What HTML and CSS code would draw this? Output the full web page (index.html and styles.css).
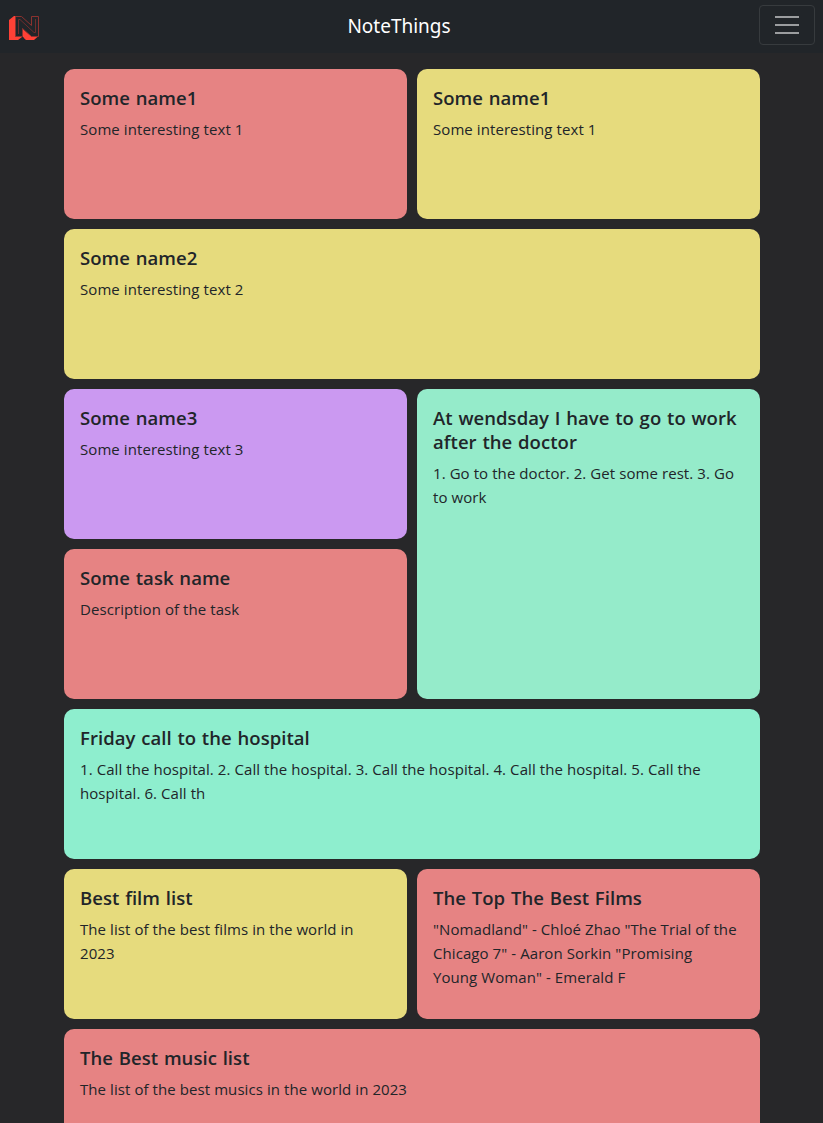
FILE: index.html
```html
<!DOCTYPE html>
<html lang="en">
<head>
<meta charset="utf-8">
<title>NoteThings</title>
<link rel="stylesheet" href="styles.css">
</head>
<body>
<header class="navbar">
  <svg class="logo" width="32" height="26" viewBox="8 15 32 26">
    <path class="logo-side" d="M9 20L14 16H19V36H22V37L18 40H9ZM22 28L31 36H38.500L34 40H26L24 38V34L22 36Z"/>
    <path class="logo-face" d="M15.500 16.500H21.500L31.500 25.500V16.500H38.500V36.500H31.500L22.500 28.500V36.500H15.500Z"/>
    <path class="logo-notch" d="M23 30L30.500 36.500L26 39.500L23 37Z"/>
    <path class="logo-inline" d="M18.500 34V19.500H20L34 32.500H35.500V19"/>
  </svg>
  <span class="brand">NoteThings</span>
  <button class="toggler" aria-label="Menu">
    <svg width="30" height="30" viewBox="0 0 30 30"><path d="M3 7H27M3 15H27M3 23H27"/></svg>
  </button>
</header>
<main class="notes">
  <article class="note red"><h5>Some name1</h5><p>Some interesting text 1</p></article>
  <article class="note yellow"><h5>Some name1</h5><p>Some interesting text 1</p></article>
  <article class="note yellow wide"><h5>Some name2</h5><p>Some interesting text 2</p></article>
  <article class="note purple"><h5>Some name3</h5><p>Some interesting text 3</p></article>
  <article class="note mint tall"><h5>At wendsday I have to go to work<br>after the doctor</h5><p>1. Go to the doctor. 2. Get some rest. 3. Go<br>to work</p></article>
  <article class="note red"><h5>Some task name</h5><p>Description of the task</p></article>
  <article class="note aqua wide"><h5>Friday call to the hospital</h5><p>1. Call the hospital. 2. Call the hospital. 3. Call the hospital. 4. Call the hospital. 5. Call the<br>hospital. 6. Call th</p></article>
  <article class="note yellow"><h5>Best film list</h5><p>The list of the best films in the world in<br>2023</p></article>
  <article class="note red"><h5>The Top The Best Films</h5><p>"Nomadland" - Chloé Zhao "The Trial of the<br>Chicago 7" - Aaron Sorkin "Promising<br>Young Woman" - Emerald F</p></article>
  <article class="note red wide"><h5>The Best music list</h5><p>The list of the best musics in the world in 2023</p></article>
</main>
</body>
</html>
```
FILE: styles.css
```css
* { box-sizing: border-box; }
html, body { height: 100%; }
body {
  margin: 0;
  overflow: hidden;
  background: #272729;
  color: #212529;
  font-family: "Open Sans", "Noto Sans", sans-serif;
}
.navbar {
  display: flex;
  align-items: center;
  justify-content: space-between;
  height: 53px;
  padding: 0 8px;
  background: #212529;
}
.logo { margin-top: 3px; }
.logo-side, .logo-notch { fill: #ff4136; }
.logo-face { fill: #212529; stroke: #8c322f; }
.logo-inline { fill: none; stroke: #6d2d2d; }
.brand {
  color: #fff;
  font-family: "Noto Sans", sans-serif;
  font-size: 19px;
  line-height: 30px;
  margin: -2px 0 0 -1px;
}
.toggler {
  display: flex;
  align-items: center;
  justify-content: center;
  width: 56px;
  height: 40px;
  margin-top: -3px;
  padding: 0;
  background: none;
  border: 1px solid #373b3e;
  border-radius: 4px;
}
.toggler path { stroke: #9b9d9f; stroke-width: 2; }
.notes {
  display: grid;
  grid-template-columns: 343px 343px;
  grid-auto-rows: 150px;
  gap: 10px;
  width: 696px;
  margin: 16px 0 0 64px;
}
.note { padding: 17px 16px; border-radius: 10px; white-space: nowrap; }
.wide { grid-column: span 2; }
.tall { grid-column: 2; grid-row: span 2; }
.red { background: #e68383; }
.yellow { background: #e6db7d; }
.purple { background: #cb99f1; }
.mint { background: #95ebca; }
.aqua { background: #8eeece; }
h5 {
  margin: 0 0 7px;
  font-size: 18.5px;
  font-weight: 600;
  line-height: 24px;
  letter-spacing: 0.05px;
  word-spacing: 0.9px;
}
p {
  margin: 0;
  font-size: 15px;
  font-weight: 400;
  line-height: 24px;
  letter-spacing: 0.075px;
}
```
